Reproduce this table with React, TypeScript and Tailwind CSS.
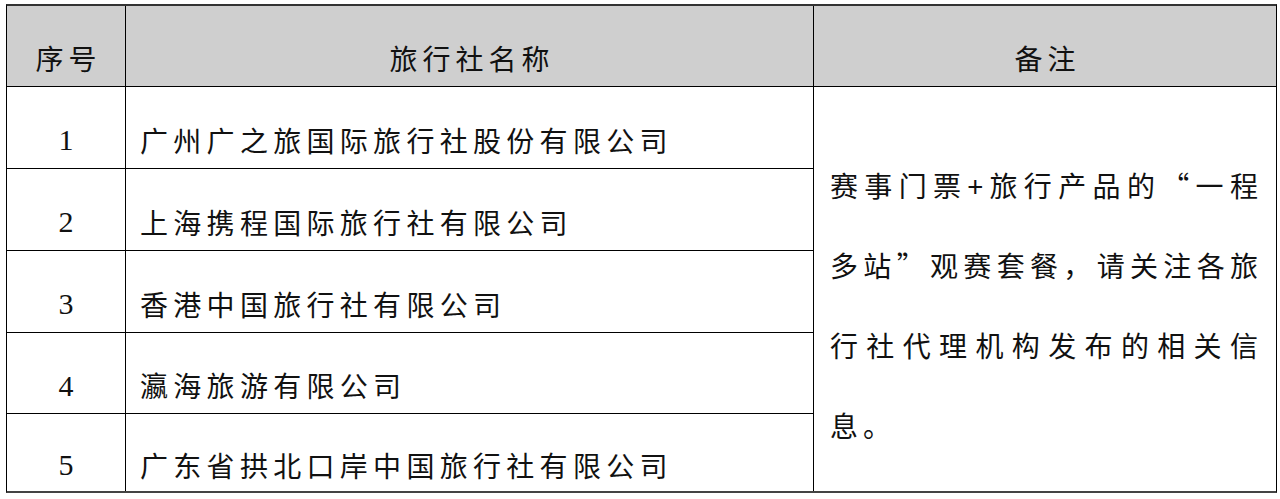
const AGENCIES = [
  "广州广之旅国际旅行社股份有限公司",
  "上海携程国际旅行社有限公司",
  "香港中国旅行社有限公司",
  "瀛海旅游有限公司",
  "广东省拱北口岸中国旅行社有限公司",
];

// Row heights follow the scanned table (last row sits on the thick bottom rule).
const ROW_HEIGHTS = ["h-[82px]", "h-[82px]", "h-[82px]", "h-[81px]", "h-[77px]"];

const REMARK_LINES = [
  "赛事门票+旅行产品的“一程",
  "多站”观赛套餐，请关注各旅",
  "行社代理机构发布的相关信",
];

const CJK = "font-['Noto_Sans_CJK_SC',sans-serif]";
const SERIF = "font-['Liberation_Serif','Noto_Sans_CJK_SC',serif]";
const HEAD =
  "flex h-[81px] items-center justify-center border-b border-black bg-[#cfcfcf] pt-6 pl-[5px] text-[28px] tracking-[5px]";

export default function App() {
  return (
    <div className="min-h-[499px] bg-white pl-[6px] pt-[4px] text-[#111]">
      <div className="grid w-[1271px] grid-cols-[119px_688px_462px] border-x border-t-2 border-b-2 border-x-black border-t-[#333] border-b-[#444]">
        {/* Header */}
        <div className={`${HEAD} border-r ${CJK}`}>序号</div>
        <div className={`${HEAD} border-r ${CJK}`}>旅行社名称</div>
        <div className={`${HEAD} ${CJK}`}>备注</div>

        {AGENCIES.map((name, i) => {
          const last = i === AGENCIES.length - 1;
          return (
            <div key={name} className="contents">
              <div
                className={`col-start-1 flex items-center justify-center border-r border-black pt-6 text-[30px] ${SERIF} ${ROW_HEIGHTS[i]} ${last ? "" : "border-b"}`}
              >
                {i + 1}
              </div>
              <div
                className={`col-start-2 flex items-center border-r border-black pt-6 pl-[14px] text-[28px] tracking-[5.3px] whitespace-nowrap ${CJK} ${ROW_HEIGHTS[i]} ${last ? "" : "border-b"}`}
              >
                {name}
              </div>
              {i === 0 ? (
                <div
                  className={`col-start-3 row-span-5 row-start-2 flex flex-col pt-[58px] pr-[18px] pl-[16px] text-[28px] leading-[80px] ${CJK}`}
                >
                  {REMARK_LINES.map((line) => (
                    <p key={line} className="text-justify whitespace-nowrap [text-align-last:justify]">
                      {line}
                    </p>
                  ))}
                  <p className="tracking-[5px]">息。</p>
                </div>
              ) : null}
            </div>
          );
        })}
      </div>
    </div>
  );
}
